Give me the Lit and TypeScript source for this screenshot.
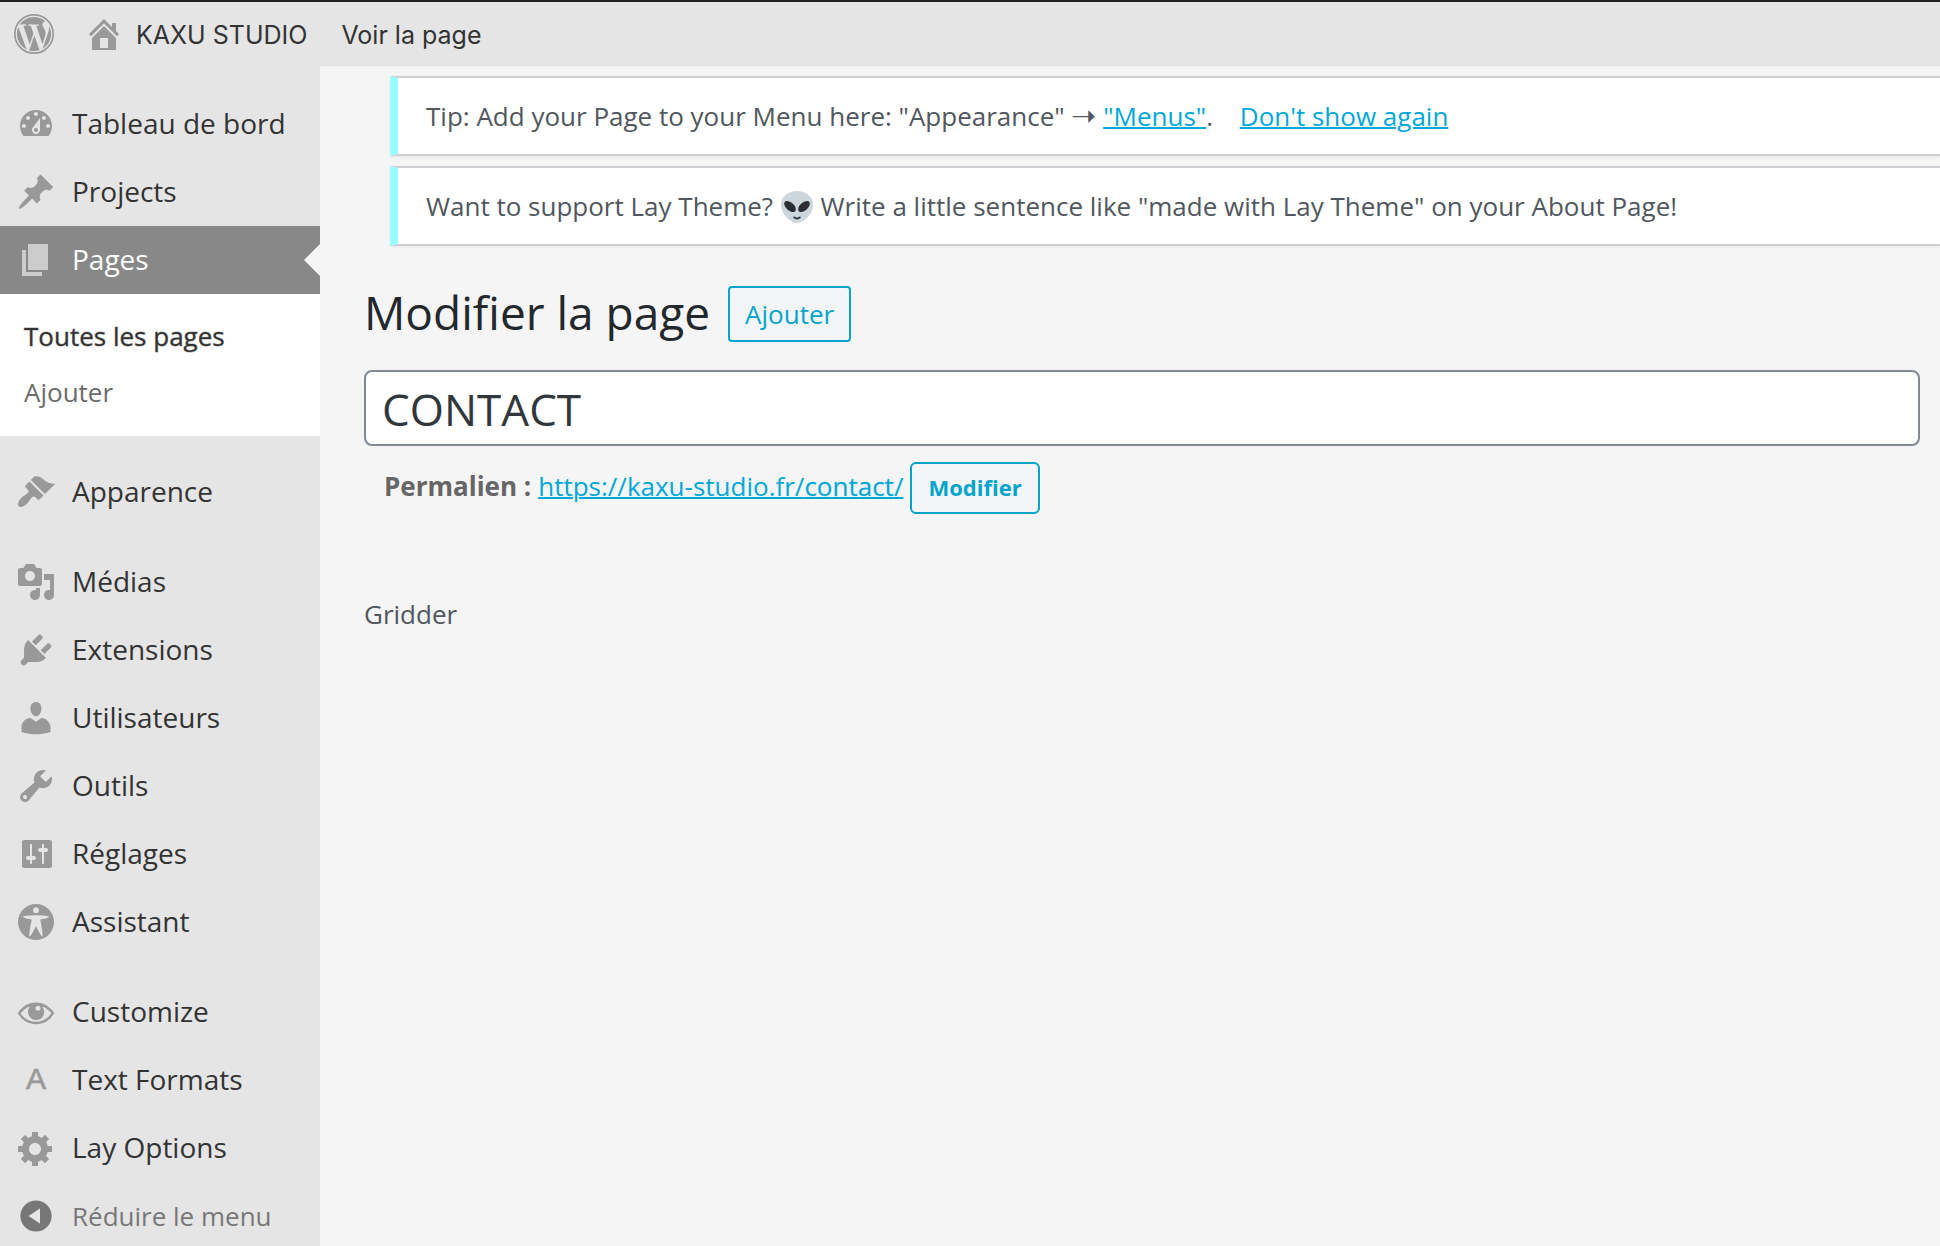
import { LitElement, html, css, svg, nothing } from "lit";
import { customElement, property, state } from "lit/decorators.js";
import { classMap } from "lit/directives/class-map.js";

const ICONS: Record<string, string> = {
  home: "M16 8.5l1.53 1.53-1.06 1.06L10 4.6l-6.47 6.49-1.06-1.06L10 2.5l4 4v-2h2v4zm-6-2.46l6 5.99V18H4v-5.97zM12 17v-5H8v5h4z",
  dashboard:
    "M3.76 16h12.48c1.1-1.37 1.76-3.11 1.76-5 0-4.42-3.58-8-8-8s-8 3.58-8 8c0 1.89.66 3.63 1.76 5zM10 4c.55 0 1 .45 1 1s-.45 1-1 1-1-.45-1-1 .45-1 1-1zM6 6c.55 0 1 .45 1 1s-.45 1-1 1-1-.45-1-1 .45-1 1-1zm8 0c.55 0 1 .45 1 1s-.45 1-1 1-1-.45-1-1 .45-1 1-1zm-5.37 5.55L12 7v6c0 1.1-.9 2-2 2s-2-.9-2-2c0-.57.24-1.08.63-1.45zM4 10c.55 0 1 .45 1 1s-.45 1-1 1-1-.45-1-1 .45-1 1-1zm12 0c.55 0 1 .45 1 1s-.45 1-1 1-1-.45-1-1 .45-1 1-1zm-5 3c0-.55-.45-1-1-1s-1 .45-1 1 .45 1 1 1 1-.45 1-1z",
  pin: "M10.44 3.02l1.82-1.82 6.36 6.35-1.83 1.82c-1.05-.68-2.48-.57-3.41.36l-.75.75c-.92.93-1.04 2.35-.35 3.41l-1.83 1.82-2.41-2.41-2.8 2.79c-.42.42-3.38 2.71-3.8 2.29s1.86-3.39 2.28-3.81l2.79-2.79L4.1 9.36l1.83-1.82c1.05.69 2.48.57 3.4-.36l.75-.75c.93-.92 1.05-2.35.36-3.41z",
  page: "M6 15V2h10v13H6zm-1 1h8v2H3V5h2v11z",
  appearance:
    "M14.48 11.06L7.41 3.99l1.5-1.5c.5-.56 2.3-.47 3.51.32 1.21.8 1.43 1.28 2.91 2.1 1.18.64 2.45 1.26 4.45.85zm-.71.71L6.7 4.7 4.93 6.47c-.39.39-.39 1.02 0 1.41l1.06 1.06c.39.39.39 1.03 0 1.42-.6.6-1.43 1.11-2.21 1.69-.35.26-.7.53-1.01.84C1.43 14.23.4 16.08 1.4 17.07c.99 1 2.84-.03 4.18-1.36.31-.31.58-.66.85-1.02.57-.78 1.08-1.61 1.69-2.21.39-.39 1.02-.39 1.41 0l1.06 1.06c.39.39 1.02.39 1.41 0z",
  media:
    "M13 11V4c0-.55-.45-1-1-1h-1.67L9 1H5L3.67 3H2c-.55 0-1 .45-1 1v7c0 .55.45 1 1 1h10c.55 0 1-.45 1-1zM7 4.5c1.38 0 2.5 1.12 2.5 2.5S8.38 9.5 7 9.5 4.5 8.38 4.5 7 5.62 4.5 7 4.5zM14 6h5v10.5c0 1.38-1.12 2.5-2.5 2.5S14 17.88 14 16.5s1.12-2.5 2.5-2.5c.17 0 .34.02.5.05V9h-3V6zm-4 8.05V13h2v3.5c0 1.38-1.12 2.5-2.5 2.5S7 17.88 7 16.5 8.12 14 9.5 14c.17 0 .34.02.5.05z",
  plugins:
    "M13.11 4.36L9.87 7.6 8 5.73l3.24-3.24c.35-.34 1.05-.2 1.56.32.52.51.66 1.21.31 1.55zm-8 1.77l.91-1.12 9.01 9.01-1.19.84c-.71.71-2.63 1.16-3.82 1.16H6.14L4.9 17.26c-.59.59-1.54.59-2.12 0-.59-.58-.59-1.53 0-2.12l1.24-1.24v-3.88c0-1.13.4-3.19 1.09-3.89zm7.26 3.97l3.24-3.24c.34-.35 1.04-.21 1.55.31.52.51.66 1.21.31 1.55l-3.24 3.25z",
  users:
    "M10 9.25c-2.27 0-2.73-3.44-2.73-3.44C7 4.02 7.82 2 9.97 2c2.16 0 2.98 2.02 2.71 3.81 0 0-.41 3.44-2.68 3.44zm0 2.57L12.72 10c2.39 0 4.52 2.33 4.52 4.53v2.49s-3.65 1.13-7.24 1.13c-3.65 0-7.24-1.13-7.24-1.13v-2.49c0-2.25 1.94-4.48 4.47-4.48z",
  tools:
    "M16.68 9.77c-1.34 1.34-3.3 1.67-4.95.99l-5.41 6.52c-.99.99-2.59.99-3.58 0s-.99-2.59 0-3.57l6.52-5.42c-.68-1.65-.35-3.61.99-4.95 1.28-1.28 3.12-1.62 4.72-1.06l-2.89 2.89 2.82 2.82 2.86-2.87c.53 1.58.18 3.39-1.08 4.65zM3.81 16.21c.4.39 1.04.39 1.43 0 .4-.4.4-1.04 0-1.43-.39-.4-1.03-.4-1.43 0-.39.39-.39 1.03 0 1.43z",
  settings:
    "M18 16V4c0-.55-.45-1-1-1H4c-.55 0-1 .45-1 1v12c0 .55.45 1 1 1h13c.55 0 1-.45 1-1zM8 11h1c.55 0 1 .45 1 1s-.45 1-1 1H8v1.5c0 .28-.22.5-.5.5s-.5-.22-.5-.5V13H6c-.55 0-1-.45-1-1s.45-1 1-1h1V5.5c0-.28.22-.5.5-.5s.5.22.5.5V11zm5-2h-1c-.55 0-1-.45-1-1s.45-1 1-1h1V5.5c0-.28.22-.5.5-.5s.5.22.5.5V7h1c.55 0 1 .45 1 1s-.45 1-1 1h-1v5.5c0 .28-.22.5-.5.5s-.5-.22-.5-.5V9z",
  access:
    "M19 10c0-4.97-4.03-9-9-9s-9 4.03-9 9 4.03 9 9 9 9-4.03 9-9zm-9-7.4c.83 0 1.5.67 1.5 1.5s-.67 1.51-1.5 1.51c-.82 0-1.5-.68-1.5-1.51s.68-1.5 1.5-1.5zM3.4 7.36c0-.65 6.6-.76 6.6-.76s6.6.11 6.6.76-4.47 1.4-4.47 1.4 1.69 8.14 1.06 8.38c-.62.24-3.19-5.19-3.19-5.19s-2.56 5.43-3.18 5.19c-.63-.24 1.06-8.38 1.06-8.38S3.4 8.01 3.4 7.36z",
  eye: "M18.3 9.5C15 4.9 8.5 3.8 3.9 7.2c-1.2.9-2.2 2.1-3 3.4.2.4.5.8.8 1.2 3.3 4.6 9.6 5.6 14.2 2.4.9-.7 1.7-1.4 2.4-2.4.3-.4.5-.8.8-1.2-.3-.4-.5-.8-.8-1.1zm-8.2-2.3c.5-.5 1.3-.5 1.8 0s.5 1.3 0 1.8-1.3.5-1.8 0-.5-1.3 0-1.8zm-.1 7.7c-3.1 0-6-1.6-7.7-4.2C3.5 9 5.1 7.8 7 7.2c-.7.8-1 1.7-1 2.7 0 2.2 1.7 4.1 4 4.1 2.2 0 4.1-1.7 4.1-4v-.1c0-1-.4-2-1.1-2.7 1.9.6 3.5 1.8 4.7 3.4-1.7 2.7-4.6 4.3-7.7 4.3z",
  gear: "M18 12h-2.18c-.17.7-.44 1.35-.81 1.93l1.54 1.54-2.1 2.1-1.54-1.54c-.58.36-1.23.63-1.91.79V19H8v-2.18c-.68-.16-1.33-.43-1.91-.79l-1.54 1.54-2.12-2.12 1.54-1.54c-.36-.58-.63-1.23-.79-1.91H1V9.03h2.17c.16-.7.44-1.35.8-1.94L2.43 5.55l2.1-2.1 1.54 1.54c.58-.37 1.24-.64 1.93-.81V2h3v2.18c.68.16 1.33.43 1.91.79l1.54-1.54 2.12 2.12-1.54 1.54c.36.59.64 1.24.8 1.94H18V12zm-8.5 1.5c1.66 0 3-1.34 3-3s-1.34-3-3-3-3 1.34-3 3 1.34 3 3 3z",
  collapse:
    "M10 2.2a7.8 7.8 0 1 0 0 15.6a7.8 7.8 0 1 0 0-15.6zM12 6.2v7.6L6.3 10z",
};

interface Entry {
  label: string;
  icon: string;
  children?: string[];
}

const MENU: Entry[][] = [
  [
    { label: "Tableau de bord", icon: "dashboard" },
    { label: "Projects", icon: "pin" },
    { label: "Pages", icon: "page", children: ["Toutes les pages", "Ajouter"] },
  ],
  [{ label: "Apparence", icon: "appearance" }],
  [
    { label: "Médias", icon: "media" },
    { label: "Extensions", icon: "plugins" },
    { label: "Utilisateurs", icon: "users" },
    { label: "Outils", icon: "tools" },
    { label: "Réglages", icon: "settings" },
    { label: "Assistant", icon: "access" },
  ],
  [
    { label: "Customize", icon: "eye" },
    { label: "Text Formats", icon: "letter" },
    { label: "Lay Options", icon: "gear" },
  ],
];

@customElement("admin-icon")
class AdminIcon extends LitElement {
  @property() name = "";

  static styles = css`
    :host {
      display: block;
      flex: none;
      width: 40px;
      height: 40px;
    }
    .glyph {
      display: block;
      width: 100%;
      height: 100%;
      fill: currentColor;
    }
    .letter {
      display: block;
      font: 30px/38px "Liberation Sans", sans-serif;
      text-align: center;
      -webkit-text-stroke: 1px rgba(153, 153, 153, 0.6);
    }
  `;

  render() {
    if (this.name === "letter") {
      return html`<span class="letter" aria-hidden="true">A</span>`;
    }
    if (this.name === "wordpress") {
      return html`<svg class="glyph" viewBox="0 0 24 24" aria-hidden="true">
        ${svg`<circle cx="12" cy="12" r="11.5" fill="none" stroke="currentColor" stroke-width="1"></circle>
        <path transform="translate(12 12) scale(.95) translate(-12 -12)" d="M21.469 6.825c.84 1.537 1.318 3.3 1.318 5.175 0 3.979-2.156 7.456-5.363 9.325l3.295-9.527c.615-1.54.82-2.771.82-3.864 0-.405-.026-.78-.07-1.11m-7.981.105c.647-.03 1.232-.105 1.232-.105.582-.075.514-.93-.067-.899 0 0-1.755.135-2.88.135-1.064 0-2.85-.15-2.85-.15-.585-.03-.661.855-.075.885 0 0 .54.061 1.125.09l1.68 4.605-2.37 7.08L5.354 6.9c.649-.03 1.234-.1 1.234-.1.585-.075.516-.93-.065-.896 0 0-1.746.138-2.874.138-.2 0-.438-.008-.69-.015C4.911 3.15 8.235 1.215 12 1.215c2.809 0 5.365 1.072 7.286 2.833-.046-.003-.091-.009-.141-.009-1.06 0-1.812.923-1.812 1.914 0 .89.513 1.643 1.06 2.531.411.72.89 1.643.89 2.977 0 .915-.354 1.994-.821 3.479l-1.075 3.585-3.9-11.61zM12 22.784c-1.059 0-2.081-.153-3.048-.437l3.237-9.406 3.315 9.087c.024.053.05.101.078.149-1.12.393-2.325.609-3.582.609M1.211 12c0-1.564.336-3.05.935-4.39L7.29 21.709C3.694 19.96 1.212 16.271 1.211 12"></path>`}
      </svg>`;
    }
    return html`<svg class="glyph" viewBox="0 0 20 20" aria-hidden="true">
      <path fill-rule="evenodd" d=${ICONS[this.name] ?? ""}></path>
    </svg>`;
  }
}

@customElement("admin-bar")
class AdminBar extends LitElement {
  static styles = css`
    :host {
      display: block;
    }
    .bar {
      display: flex;
      align-items: center;
      height: 64px;
      border-top: 2px solid #222;
      background: #e5e5e5;
      font: 25px/36px Inter, Roboto, "Liberation Sans", sans-serif;
    }
    .link {
      display: flex;
      align-items: center;
      gap: 12px;
      color: #333;
      text-decoration: none;
      white-space: nowrap;
    }
    .logo {
      padding: 0 14px;
    }
    .site {
      padding: 0 16px;
    }
    .view {
      padding: 0 18px;
    }
    .text {
      padding-top: 2px;
    }
    .icon {
      color: #999;
    }
  `;

  render() {
    return html`<nav class="bar" aria-label="Barre d’outils">
      <a class="link logo" href="#about" aria-label="À propos de WordPress">
        <admin-icon class="icon" name="wordpress"></admin-icon>
      </a>
      <a class="link site" href="#site">
        <admin-icon class="icon" name="home"></admin-icon><span class="text">KAXU STUDIO</span>
      </a>
      <a class="link view" href="#view"><span class="text">Voir la page</span></a>
    </nav>`;
  }
}

@customElement("admin-menu")
class AdminMenu extends LitElement {
  @state() private current = "Pages";

  static styles = css`
    :host {
      display: block;
      background: #e5e5e5;
    }
    .menu {
      display: flex;
      flex-direction: column;
      gap: 22px;
      padding-top: 24px;
    }
    .group {
      margin: 0;
      padding: 0;
      list-style: none;
    }
    .item {
      position: relative;
      display: flex;
      align-items: center;
      gap: 16px;
      box-sizing: border-box;
      width: 100%;
      height: 68px;
      padding: 0 16px;
      border: 0;
      background: none;
      color: #333;
      font: inherit;
      font-size: 28px;
      line-height: 36px;
      text-align: left;
      text-decoration: none;
      white-space: nowrap;
      cursor: pointer;
    }
    .label {
      padding-bottom: 2px;
    }
    .icon {
      color: #999;
    }
    .current {
      background: #888;
      color: #fff;
    }
    .current .icon {
      color: #ccc;
    }
    .current::after {
      content: "";
      position: absolute;
      top: 18px;
      right: 0;
      border: 16px solid transparent;
      border-left-width: 0;
      border-right-color: #f5f5f5;
    }
    .sub {
      margin: 0;
      padding: 14px 0 16px;
      background: #fff;
      list-style: none;
    }
    .subitem {
      display: block;
      padding: 0 24px;
      color: #6b6b6b;
      font-size: 26px;
      line-height: 56px;
      text-decoration: none;
    }
    .active {
      color: #333;
      -webkit-text-stroke: 1px rgba(51, 51, 51, 0.4);
    }
    .collapse {
      height: 64px;
      padding-bottom: 10px;
      padding-top: 14px;
      color: #777;
      font-size: 26px;
    }
    .collapse .icon {
      color: #777;
    }
  `;

  private entry(e: Entry) {
    const current = e.label === this.current;
    return html`<li>
      <a class=${classMap({ item: true, current })} href="#${e.icon}">
        <admin-icon class="icon" name=${e.icon}></admin-icon><span class="label">${e.label}</span>
      </a>
      ${current && e.children
        ? html`<ul class="sub">
            ${e.children.map(
              (c, i) =>
                html`<li>
                  <a class=${classMap({ subitem: true, active: i === 0 })} href="#pages-${i}">${c}</a>
                </li>`
            )}
          </ul>`
        : nothing}
    </li>`;
  }

  render() {
    return html`<nav class="menu" aria-label="Menu principal">
        ${MENU.map((g) => html`<ul class="group">${g.map((e) => this.entry(e))}</ul>`)}
      </nav>
      <button class="item collapse" type="button">
        <admin-icon class="icon" name="collapse"></admin-icon>Réduire le menu
      </button>`;
  }
}

@customElement("page-editor")
class PageEditor extends LitElement {
  static styles = css`
    :host {
      display: block;
      color: #50575e;
      font-size: 26px;
      line-height: 36px;
    }
    .notices {
      display: flex;
      flex-direction: column;
      gap: 10px;
      padding: 10px 0 0 70px;
    }
    .notice {
      padding: 20px 28px;
      border: 2px solid #ccd0d4;
      border-left: 8px solid #9ff;
      border-right: 0;
      background: #fff;
      box-shadow: 0 2px 2px rgba(0, 0, 0, 0.04);
    }
    .text {
      margin: 0;
    }
    .alien {
      width: 34px;
      height: 34px;
      vertical-align: -8px;
    }
    .arrow {
      font-size: 30px;
      line-height: 1;
    }
    .link {
      color: #00a8d8;
      text-decoration-thickness: 2px;
    }
    .spaced {
      margin-left: 20px;
    }
    .form {
      display: flex;
      flex-direction: column;
      padding: 40px 20px 0 44px;
    }
    .head {
      display: flex;
      align-items: center;
      gap: 18px;
      margin-bottom: 28px;
    }
    .heading {
      margin: 0;
      padding-bottom: 4px;
      color: #23282d;
      font-size: 46px;
      font-weight: 400;
      line-height: 52px;
    }
    .button {
      box-sizing: border-box;
      display: inline-block;
      padding: 0 15px;
      border: 2px solid #04a4cc;
      border-radius: 4px;
      background: #f3f5f6;
      color: #04a4cc;
      font: inherit;
      line-height: 52px;
      text-decoration: none;
    }
    .title {
      box-sizing: border-box;
      width: 100%;
      height: 76px;
      padding: 2px 16px 0;
      border: 2px solid #7e8993;
      border-radius: 8px;
      background: #fff;
      color: #32373c;
      font: inherit;
      font-size: 44px;
      line-height: 70px;
    }
    .permalink {
      display: flex;
      align-items: flex-start;
      gap: 7px;
      padding: 16px 20px 0;
      line-height: 48px;
    }
    .label {
      color: #666;
    }
    .edit {
      padding: 0 16px 2px;
      border-radius: 6px;
      font-size: 22px;
      font-weight: 700;
      line-height: 46px;
    }
    .slug {
      -webkit-text-stroke: 1px rgba(0, 168, 216, 0.2);
    }
    .gridder {
      margin: 82px 0 0;
      font-size: 26px;
      font-weight: 400;
    }
  `;

  render() {
    return html`<div class="notices">
        <div class="notice">
          <p class="text">
            Tip: Add your Page to your Menu here: "Appearance" <span class="arrow">➝</span>
            <a class="link" href="#menus">"Menus"</a>.
            <a class="link spaced" href="#dismiss">Don't show again</a>
          </p>
        </div>
        <div class="notice">
          <p class="text">
            Want to support Lay Theme?
            <svg class="alien" viewBox="0 0 36 36" role="img" aria-label="alien">
              <path fill="#CCD6DD" d="M35 16C35 25 25 35 18 35S1 25 1 16C1 7 8.500 1 18 1S35 7 35 16z"></path>
              <ellipse cx="10.600" cy="17.500" rx="7.400" ry="4.200" fill="#292F33" transform="rotate(42 10.600 17.500)"></ellipse>
              <ellipse cx="25.400" cy="17.500" rx="7.400" ry="4.200" fill="#292F33" transform="rotate(-42 25.400 17.500)"></ellipse>
              <path fill="none" stroke="#292F33" stroke-width="2" stroke-linecap="round" d="M15 29Q18 31.500 21 29"></path>
            </svg>
            Write a little sentence like "made with Lay Theme" on your About Page!
          </p>
        </div>
      </div>
      <form class="form">
        <div class="head">
          <h1 class="heading">Modifier la page</h1>
          <a class="button" href="#new">Ajouter</a>
        </div>
        <input class="title" type="text" aria-label="Titre" .value=${"CONTACT"} />
        <div class="permalink">
          <strong class="label">Permalien :</strong>
          <a class="link" href="#contact">https://kaxu-studio.fr/<span class="slug">contact</span>/</a>
          <button class="button edit" type="button">Modifier</button>
        </div>
        <h2 class="gridder">Gridder</h2>
      </form>`;
  }
}

@customElement("app-root")
class AppRoot extends LitElement {
  static styles = css`
    :host {
      display: flex;
      flex-direction: column;
      min-height: 100vh;
      background: #f5f5f5;
      font-family: "Open Sans", "Noto Sans", sans-serif;
    }
    .body {
      flex: 1;
      display: grid;
      grid-template-columns: 320px minmax(0, 1fr);
    }
  `;

  render() {
    return html`<admin-bar></admin-bar>
      <div class="body">
        <admin-menu></admin-menu>
        <main><page-editor></page-editor></main>
      </div>`;
  }
}
